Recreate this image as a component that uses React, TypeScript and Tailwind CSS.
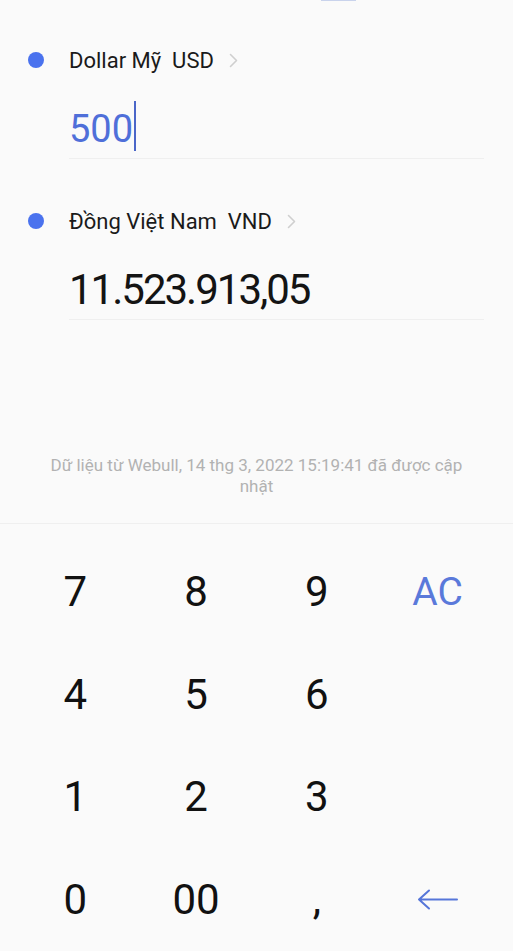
import React from 'react';

const Chevron: React.FC = () => (
  <svg width="9" height="15" viewBox="0 0 9 15" fill="none" className="ml-[15px]">
    <path d="M1.5 1.5 L7.5 7.5 L1.5 13.5" stroke="#cfcfcf" strokeWidth="1.6" strokeLinecap="round" strokeLinejoin="round" />
  </svg>
);

const BackArrow: React.FC = () => (
  <svg width="41" height="21" viewBox="0 0 41 21" fill="none">
    <path d="M2 10.5 H40 M12 1.5 L2 10.5 L12 19.5" stroke="#5676d9" strokeWidth="2" strokeLinecap="round" strokeLinejoin="round" />
  </svg>
);

const CurrencyRow: React.FC<{ label: string; code: string; value: string; active?: boolean }> = ({ label, code, value, active }) => (
  <div className="flex flex-col">
    {/* currency name */}
    <div className="flex items-center h-[30px]">
      <div className="w-[69px] pl-[28px]">
        <div className="w-4 h-4 rounded-full bg-[#4a72ee]" />
      </div>
      <span className="text-[22px] text-[#1a1a1a] leading-none whitespace-pre pt-[2px]">{label}  {code}</span>
      <Chevron />
    </div>
    {/* amount */}
    <div className="ml-[69px] mr-[29px] mt-[24px] h-[60px] flex items-center border-b border-[#efefef]">
      {active ? (
        <>
          <span className="text-[38px] leading-none text-[#4f6fd9]">{value}</span>
          <span className="w-[2px] h-[50px] bg-[#4a66c8] ml-[1px] -mt-[6px]" />
        </>
      ) : (
        <span className="text-[42px] leading-none text-[#141414] tracking-[-2px]">{value}</span>
      )}
    </div>
  </div>
);

const keys = ['7', '8', '9', 'AC', '4', '5', '6', '', '1', '2', '3', '', '0', '00', ',', 'back'];

export default function App() {
  return (
    <div className="w-[513px] h-[951px] bg-[#fafafa] font-['Roboto',sans-serif] flex flex-col overflow-hidden">
      <div className="h-[2px] w-[35px] ml-[321px] bg-[#c9d3ec]" />

      <div className="mt-[44px]">
        <CurrencyRow label="Dollar Mỹ" code="USD" value="500" active />
      </div>
      <div className="mt-[47px]">
        <CurrencyRow label="Đồng Việt Nam" code="VND" value="11.523.913,05" />
      </div>

      <p className="mt-[135px] px-[44px] text-center text-[17px] leading-[21px] text-[#b2b2b2]">
        Dữ liệu từ Webull, 14 thg 3, 2022 15:19:41 đã được cập nhật
      </p>

      <div className="mt-[26px] border-t border-[#efefef] pt-[17px] px-[15px] grid grid-cols-4">
        {keys.map((k, i) => (
          <div key={i} className="h-[102.5px] flex items-center justify-center">
            {k === 'back' ? (
              <BackArrow />
            ) : k === 'AC' ? (
              <span className="text-[39px] leading-none text-[#5a79da]">AC</span>
            ) : (
              <span className="text-[42px] leading-none text-[#111]">{k}</span>
            )}
          </div>
        ))}
      </div>
    </div>
  );
}
